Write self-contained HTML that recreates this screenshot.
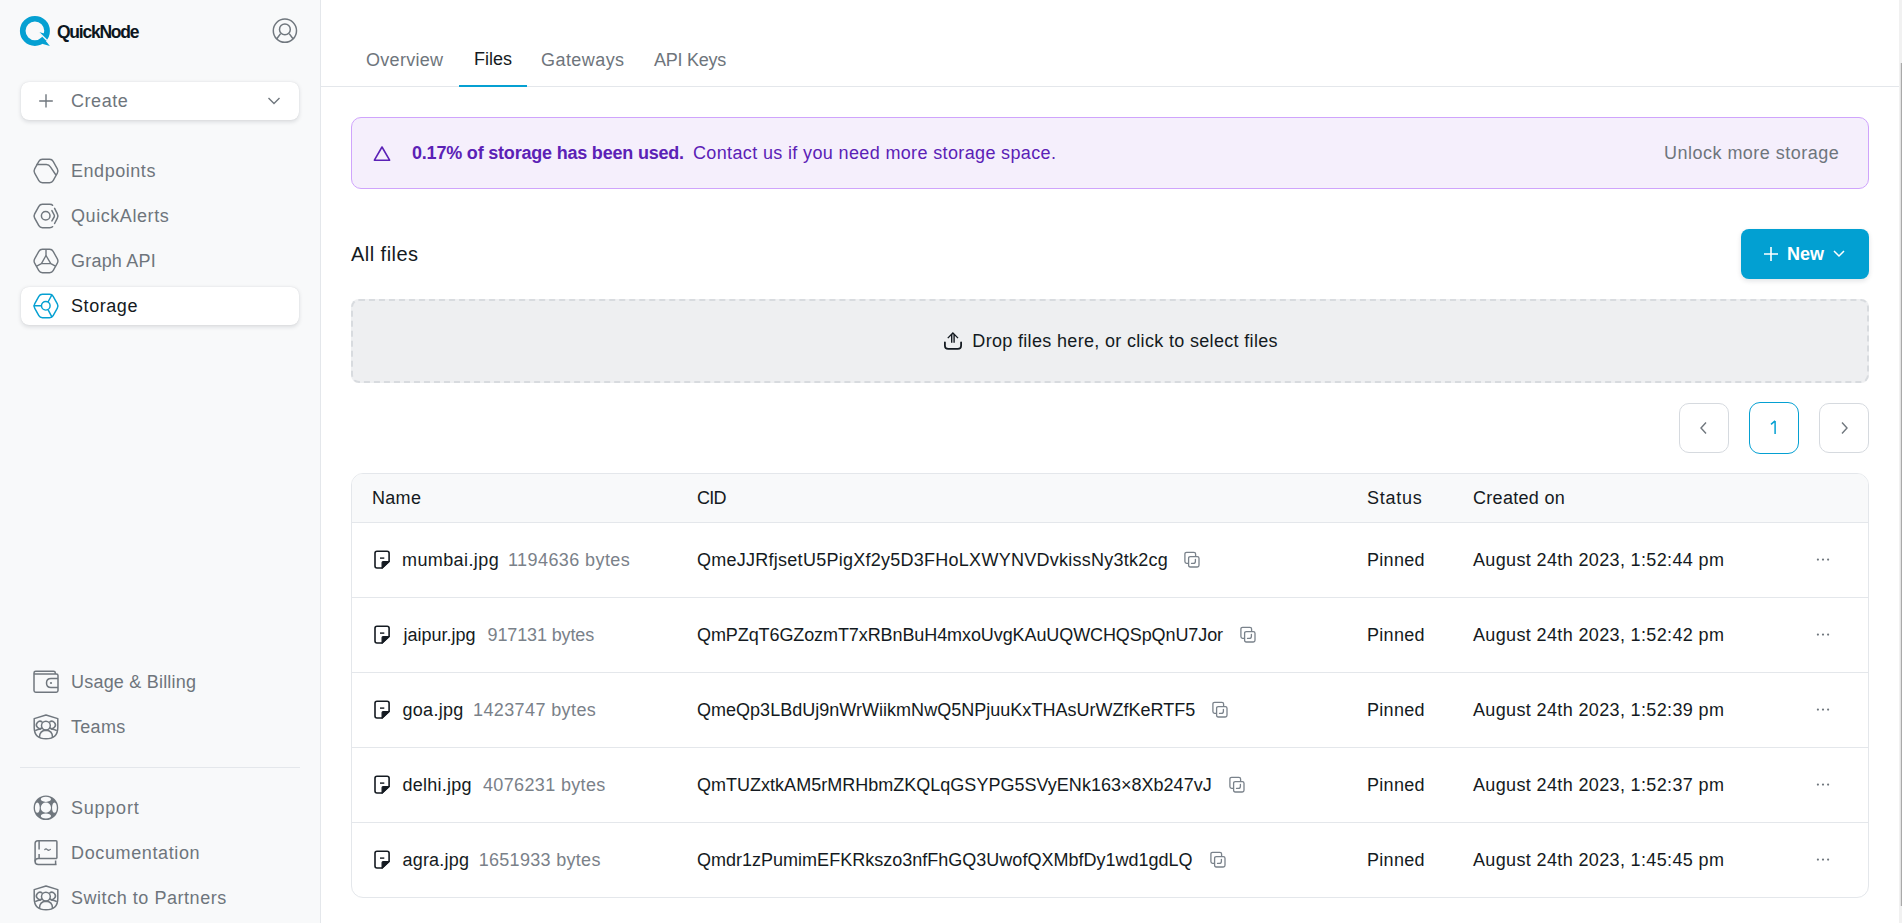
<!DOCTYPE html>
<html><head><meta charset="utf-8">
<style>
*{box-sizing:border-box;margin:0;padding:0}
html,body{width:1902px;height:923px;overflow:hidden;background:#fff;font-family:"Liberation Sans",sans-serif;}
.abs{position:absolute}
#side{position:absolute;left:0;top:0;width:321px;height:923px;background:#f8f9fa;border-right:1px solid #e4e7eb}
.t{position:absolute;white-space:nowrap;font-size:18px;line-height:20px;letter-spacing:0.3px}
.nav{color:#6e757c}
.dk{color:#141a21}
.ic{position:absolute;overflow:visible}
.ic *{vector-effect:non-scaling-stroke}
#scroll{position:absolute;left:1899px;top:0;width:3px;height:923px;background:#f1f1f1}
#thumb{position:absolute;left:1900px;top:63px;width:2px;height:843px;background:linear-gradient(to right,#e2e2e2 0,#e2e2e2 50%,#a9a9a9 50%)}
.row{position:absolute;left:352px;width:1516px;height:1px;background:#e4e7eb}
.gr{color:#7a8189}
</style></head>
<body>
<div id="side">
  <!-- logo -->
  <svg class="ic" style="left:14px;top:10px" width="42" height="42" viewBox="0 0 42 42">
    <path fill="#05a0d2" fill-rule="evenodd" d="M20.9 5.9a15 15 0 1 0 0 30a15 15 0 1 0 0-30zM20.9 11.5a9.35 9.35 0 1 1 0 18.7a9.35 9.35 0 1 1 0-18.7z"/>
    <path fill="#05a0d2" d="M24.6 22.1L30.4 23.6L29.6 27.4Z"/>
    <path fill="#05a0d2" d="M31 30L35.9 36L28.8 33.9L27 31Z"/>
    <path fill="none" stroke="#f8f9fa" stroke-width="1.4" d="M24.4 21.9L32.6 30.1"/>
  </svg>
  <div class="t" style="left:57px;top:22px;font-weight:bold;font-size:17.5px;color:#0c1620;letter-spacing:-1.25px">QuickNode</div>
  <!-- profile -->
  <svg class="ic" style="left:266px;top:13px" width="36" height="36" viewBox="0 0 36 36">
    <g fill="none" stroke="#70777e" stroke-width="1.5">
      <circle cx="18.9" cy="17.7" r="11.6"/>
      <circle cx="18.9" cy="16.4" r="5.4"/>
      <path d="M14.6 20.6L10.8 25.8M23.2 20.6L27 25.8"/>
    </g>
  </svg>
  <!-- create -->
  <div class="abs" style="left:21px;top:82px;width:278px;height:38px;background:#fff;border-radius:8px;box-shadow:0 1.5px 4px rgba(16,24,40,.13),0 0 1px rgba(16,24,40,.12)"></div>
  <svg class="ic" style="left:38px;top:93px" width="16" height="16" viewBox="0 0 16 16"><path d="M8 1.3V14.6M1.2 8H14.8" stroke="#70777e" stroke-width="1.4" fill="none"/></svg>
  <div class="t nav" style="left:71px;top:91px;letter-spacing:0.56px">Create</div>
  <svg class="ic" style="left:266px;top:95px" width="16" height="12" viewBox="0 0 16 12"><path d="M2.5 3L8 8.6L13.5 3" stroke="#70777e" stroke-width="1.4" fill="none"/></svg>

  <!-- nav icons -->
  <svg class="ic" style="left:28px;top:154px" width="36" height="36" viewBox="0 0 36 36">
    <g fill="none" stroke="#70777e" stroke-width="1.4" stroke-linejoin="round">
      <path d="M14.4 5.2H21.6Q24 5.2 25.16 7.3L29.34 14.9Q30.5 17 29.34 19.1L25.16 26.7Q24 28.8 21.6 28.8H14.4Q12 28.8 10.84 26.7L6.66 19.1Q5.5 17 6.66 14.9L10.84 7.3Q12 5.2 14.4 5.2Z"/>
      <path d="M8.4 10.5H18.3Q21 10.5 22.4 12.9L27.9 21"/>
    </g>
  </svg>
  <div class="t nav" style="left:71px;top:161px;letter-spacing:0.54px">Endpoints</div>
  <svg class="ic" style="left:28px;top:199px" width="36" height="36" viewBox="0 0 36 36">
    <g fill="none" stroke="#70777e" stroke-width="1.5" stroke-linecap="round" stroke-linejoin="round">
      <path d="M24.6 6.3Q24 5.2 21.6 5.2H14.4Q12 5.2 10.84 7.3L6.66 14.9Q5.5 17 6.66 19.1L10.84 26.7Q12 28.8 14.4 28.8H21.6Q24 28.8 24.6 27.7"/>
      <path d="M26.6 9.3L29.34 14.9Q30.5 17 29.34 19.1L26.6 24.5"/>
      <path d="M23.9 11.6L26.2 16Q26.7 17 26.2 18L23.9 21.9"/>
      <circle cx="17.7" cy="16.8" r="4.3"/>
    </g>
  </svg>
  <div class="t nav" style="left:71px;top:206px;letter-spacing:0.57px">QuickAlerts</div>
  <svg class="ic" style="left:28px;top:244px" width="36" height="36" viewBox="0 0 36 36">
    <g fill="none" stroke="#70777e" stroke-width="1.4" stroke-linejoin="round">
      <path d="M14.4 5.2H21.6Q24 5.2 25.16 7.3L29.34 14.9Q30.5 17 29.34 19.1L25.16 26.7Q24 28.8 21.6 28.8H14.4Q12 28.8 10.84 26.7L6.66 19.1Q5.5 17 6.66 14.9L10.84 7.3Q12 5.2 14.4 5.2Z"/>
      <path d="M18 5.2V11.5M18 11.5L13.4 19.6H22.8L18 11.5M13.4 19.6L8.2 22.4M22.8 19.6L28 22.4"/>
    </g>
  </svg>
  <div class="t nav" style="left:71px;top:251px;letter-spacing:0.21px">Graph API</div>
  <!-- storage active -->
  <div class="abs" style="left:21px;top:287px;width:278px;height:38px;background:#fff;border-radius:8px;box-shadow:0 1.5px 4px rgba(16,24,40,.13),0 0 1px rgba(16,24,40,.12)"></div>
  <svg class="ic" style="left:28px;top:289px" width="36" height="36" viewBox="0 0 36 36">
    <g fill="none" stroke="#05a0d2" stroke-width="1.45" stroke-linejoin="round">
      <path d="M14.4 5.2H21.6Q24 5.2 25.16 7.3L29.34 14.9Q30.5 17 29.34 19.1L25.16 26.7Q24 28.8 21.6 28.8H14.4Q12 28.8 10.84 26.7L6.66 19.1Q5.5 17 6.66 14.9L10.84 7.3Q12 5.2 14.4 5.2Z"/>
      <circle cx="17.8" cy="16.8" r="4.3"/>
      <path d="M5.6 16.8H13.5M20 13L24 5.6M20 20.6L24 28.2"/>
    </g>
  </svg>
  <div class="t dk" style="left:71px;top:296px;letter-spacing:0.57px">Storage</div>

  <!-- bottom nav -->
  <svg class="ic" style="left:28px;top:663px" width="36" height="36" viewBox="0 0 36 36">
    <g fill="none" stroke="#70777e" stroke-width="1.5" stroke-linejoin="round">
      <path d="M6 10.9V27.6Q6 29.3 7.7 29.3H28.3Q30 29.3 30 27.6V12.6Q30 10.9 28.3 10.9H6V9.9Q6 8.2 7.7 8.2H25.6Q27.3 8.2 27.3 9.9V10.9"/>
      <path d="M30 15.4H23Q18.5 15.4 18.5 19.9Q18.5 24.4 23 24.4H30"/>
    </g>
    <circle cx="23" cy="20" r="1.1" fill="#70777e"/>
  </svg>
  <div class="t nav" style="left:71px;top:672px;letter-spacing:0.21px">Usage &amp; Billing</div>
  <svg class="ic" style="left:28px;top:708px" width="36" height="36" viewBox="0 0 36 36">
    <g fill="none" stroke="#70777e" stroke-width="1.5" stroke-linejoin="round">
      <path d="M18 7L29.8 10.6V19.5Q29.8 30.8 18 30.8Q6.2 30.8 6.2 19.5V10.6Z"/>
      <circle cx="17.9" cy="17.6" r="4.4"/>
      <path d="M14.3 14.1A3.6 3.6 0 1 0 14.3 19.7"/>
      <path d="M21.5 14.1A3.6 3.6 0 1 1 21.5 19.7"/>
      <path d="M11.5 29.3Q11.5 22.5 18 22.3Q24.5 22.5 24.5 29.3"/>
      <path d="M7.2 22.6Q9.5 20.9 13.2 20.9M28.8 22.6Q26.5 20.9 22.8 20.9"/>
    </g>
  </svg>
  <div class="t nav" style="left:71px;top:717px;letter-spacing:0.3px">Teams</div>
  <div class="abs" style="left:20px;top:767px;width:280px;height:1px;background:#e4e7eb"></div>
  <svg class="ic" style="left:28px;top:789px" width="36" height="36" viewBox="0 0 36 36">
    <path fill="#70777e" fill-rule="evenodd" d="M17.9 6.4a12.3 12.3 0 1 0 0 24.6a12.3 12.3 0 1 0 0-24.6zM17.9 13.6a5.1 5.1 0 1 1 0 10.2a5.1 5.1 0 1 1 0-10.2z
      M17.9 7.8c3 0 5.1 1.1 5.1 2.55s-2.1 2.55-5.1 2.55s-5.1-1.1-5.1-2.55s2.1-2.55 5.1-2.55z
      M17.9 24.5c3 0 5.1 1.1 5.1 2.55s-2.1 2.55-5.1 2.55s-5.1-1.1-5.1-2.55s2.1-2.55 5.1-2.55z
      M9.35 13.5c1.4 0 2.4 2.3 2.4 5.15s-1 5.15-2.4 5.15s-2.4-2.3-2.4-5.15s1-5.15 2.4-5.15z
      M26.45 13.5c1.4 0 2.4 2.3 2.4 5.15s-1 5.15-2.4 5.15s-2.4-2.3-2.4-5.15s1-5.15 2.4-5.15z"/>
  </svg>
  <div class="t nav" style="left:71px;top:798px;letter-spacing:0.77px">Support</div>
  <svg class="ic" style="left:28px;top:834px" width="36" height="36" viewBox="0 0 36 36">
    <g fill="none" stroke="#70777e" stroke-width="1.5" stroke-linejoin="round">
      <path d="M28.9 24.6H10.2Q7.1 24.6 7.1 27.6Q7.1 30.6 10.2 30.6H28.5"/>
      <path d="M7.1 27.6V9.6Q7.1 6.8 9.9 6.8H28Q28.9 6.8 28.9 7.7V24.6"/>
      <path d="M11.1 7V15.5M11.1 20V24.6M27.6 26.6V30.6"/>
      <path d="M16.8 15.5Q18 14.2 19.3 15.6Q20.6 17 22.4 15.4" stroke-width="1.2" stroke-linecap="round"/>
    </g>
  </svg>
  <div class="t nav" style="left:71px;top:843px;letter-spacing:0.63px">Documentation</div>
  <svg class="ic" style="left:28px;top:879px" width="36" height="36" viewBox="0 0 36 36">
    <g fill="none" stroke="#70777e" stroke-width="1.5" stroke-linejoin="round">
      <path d="M18 7L29.8 10.6V19.5Q29.8 30.8 18 30.8Q6.2 30.8 6.2 19.5V10.6Z"/>
      <circle cx="17.9" cy="17.6" r="4.4"/>
      <path d="M14.3 14.1A3.6 3.6 0 1 0 14.3 19.7"/>
      <path d="M21.5 14.1A3.6 3.6 0 1 1 21.5 19.7"/>
      <path d="M11.5 29.3Q11.5 22.5 18 22.3Q24.5 22.5 24.5 29.3"/>
      <path d="M7.2 22.6Q9.5 20.9 13.2 20.9M28.8 22.6Q26.5 20.9 22.8 20.9"/>
    </g>
  </svg>
  <div class="t nav" style="left:71px;top:888px;letter-spacing:0.54px">Switch to Partners</div>
</div>

<!-- tabs -->
<div class="abs" style="left:321px;top:86px;width:1578px;height:1px;background:#e4e7eb"></div>
<div class="t nav" style="left:366px;top:50px">Overview</div>
<div class="t dk" style="left:474px;top:49px;letter-spacing:0">Files</div>
<div class="t nav" style="left:541px;top:50px;letter-spacing:0.44px">Gateways</div>
<div class="t nav" style="left:654px;top:50px;letter-spacing:-0.27px">API Keys</div>
<div class="abs" style="left:459px;top:85px;width:68px;height:2px;background:#05a0d2"></div>

<!-- alert -->
<div class="abs" style="left:351px;top:117px;width:1518px;height:72px;background:#f5effc;border:1px solid #cfa4fc;border-radius:10px"></div>
<svg class="ic" style="left:372px;top:144px" width="20" height="20" viewBox="0 0 20 20"><path d="M10 3L17.6 16.2H2.4Z" fill="none" stroke="#5b21b6" stroke-width="1.6" stroke-linejoin="round"/></svg>
<div class="t" style="left:412px;top:143px;color:#5b21b6;font-weight:bold;letter-spacing:-0.2px">0.17% of storage has been used.</div>
<div class="t" style="left:693px;top:143px;color:#5b21b6;letter-spacing:0.36px">Contact us if you need more storage space.</div>
<div class="t nav" style="left:1664px;top:143px;letter-spacing:0.48px">Unlock more storage</div>

<!-- all files -->
<div class="t dk" style="left:351px;top:243px;font-size:20px;line-height:22px;letter-spacing:0.46px">All files</div>
<div class="abs" style="left:1741px;top:229px;width:128px;height:50px;background:#02a0d2;border-radius:8px;box-shadow:0 2px 5px rgba(16,24,40,.12)"></div>
<svg class="ic" style="left:1762px;top:245px" width="18" height="18" viewBox="0 0 18 18"><path d="M9 2V16M2 9H16" stroke="#fff" stroke-width="1.6" fill="none"/></svg>
<div class="t" style="left:1787px;top:244px;color:#fff;font-weight:bold;letter-spacing:0">New</div>
<svg class="ic" style="left:1832px;top:248px" width="14" height="12" viewBox="0 0 14 12"><path d="M2 3L7 8L12 3" stroke="#fff" stroke-width="1.5" fill="none"/></svg>

<!-- dropzone -->
<div class="abs" style="left:351px;top:299px;width:1518px;height:84px;background:#eeeff1;border:2px dashed #d8dbdf;border-radius:8px"></div>
<svg class="ic" style="left:938px;top:324px" width="30" height="32" viewBox="0 0 30 32">
  <g fill="none" stroke="#141a21" stroke-width="1.8" stroke-linejoin="round" stroke-linecap="round">
    <path d="M14.9 8L9.3 13.7L10.3 14.4L13 11.8V18.8H16.8V11.8L19.5 14.4L20.5 13.7Z" fill="#141a21" stroke="none"/><path d="M14.9 10.8V18.6" stroke="#eeeff1" stroke-width="1"/>
    <path d="M6.9 18.3V21.5Q6.9 24.9 10.3 24.9H19.7Q23.1 24.9 23.1 21.5V18.3"/>
  </g>
</svg>
<div class="t dk" style="left:972.3px;top:331px;letter-spacing:0.33px">Drop files here, or click to select files</div>

<!-- pagination -->
<div class="abs" style="left:1679px;top:403px;width:50px;height:50px;border:1px solid #d6dadf;border-radius:10px"></div>
<svg class="ic" style="left:1696px;top:420px" width="16" height="16" viewBox="0 0 16 16"><path d="M10 2.6L5 8L10 13.4" stroke="#70777e" stroke-width="1.4" fill="none"/></svg>
<div class="abs" style="left:1749px;top:402px;width:50px;height:52px;border:1.5px solid #05a0d2;border-radius:11px"></div>
<svg class="ic" style="left:1766px;top:418px" width="16" height="18" viewBox="0 0 16 18"><path d="M9.1 2.9V16M9.1 2.9L5 6.4" stroke="#05a0d2" stroke-width="1.5" fill="none"/></svg>
<div class="abs" style="left:1819px;top:403px;width:50px;height:50px;border:1px solid #d6dadf;border-radius:10px"></div>
<svg class="ic" style="left:1836px;top:420px" width="16" height="16" viewBox="0 0 16 16"><path d="M6 2.6L11 8L6 13.4" stroke="#70777e" stroke-width="1.4" fill="none"/></svg>

<!-- table -->
<div class="abs" style="left:351px;top:473px;width:1518px;height:425px;border:1px solid #e4e7eb;border-radius:12px;overflow:hidden">
  <div class="abs" style="left:0;top:0;width:1516px;height:49px;background:#f8f9fa;border-bottom:1px solid #e4e7eb"></div>
</div>
<div class="t dk" style="left:372px;top:488px">Name</div>
<div class="t dk" style="left:697px;top:488px;letter-spacing:-0.8px">CID</div>
<div class="t dk" style="left:1367px;top:488px;letter-spacing:0.72px">Status</div>
<div class="t dk" style="left:1473px;top:488px">Created on</div>

<div id="rows">
<svg class="ic" style="left:370px;top:546px" width="24" height="28" viewBox="0 0 24 28"><path d="M12.1 22H7Q5 22 5 20V7.3Q5 5.3 7 5.3H17.1Q19.1 5.3 19.1 7.3V15.3Z" fill="none" stroke="#141a21" stroke-width="1.6" stroke-linejoin="round"/><path d="M12.1 22V16.6Q12.1 15.5 13.2 15.5H19.1Z" fill="#141a21" stroke="#141a21" stroke-width="1.2" stroke-linejoin="round"/><path d="M10 12.1H14.3" stroke="#141a21" stroke-width="1.4"/></svg>
<div class="t dk nm" style="left:402px;top:550px;letter-spacing:0.4px">mumbai.jpg</div>
<div class="t gr sz" style="left:508px;top:550px;letter-spacing:0.42px">1194636 bytes</div>
<div class="t dk cid" style="left:697px;top:550px;letter-spacing:0.26px">QmeJJRfjsetU5PigXf2y5D3FHoLXWYNVDvkissNy3tk2cg</div>
<svg class="ic" style="left:1180px;top:548px" width="24" height="24" viewBox="0 0 24 24"><g fill="none" stroke="#7a828b" stroke-width="1.3" stroke-linejoin="round"><path d="M8.6 15.3H6.6Q4.9 15.3 4.9 13.6V6.1Q4.9 4.4 6.6 4.4H13.9Q15.6 4.4 15.6 6.1V8.6"/><path d="M10.3 8.6H17.3Q19 8.6 19 10.3V17.3Q19 19 17.3 19H10.3Q8.6 19 8.6 17.3V10.3Q8.6 8.6 10.3 8.6Z"/><path d="M15.4 11.3V13.2Q15.4 15.4 13.2 15.4H11.5" stroke-linecap="round"/></g></svg>
<div class="t dk" style="left:1367px;top:550px">Pinned</div>
<div class="t dk dt" style="left:1473px;top:550px;letter-spacing:0.36px">August 24th 2023, 1:52:44 pm</div>
<svg class="ic" style="left:1814px;top:552px" width="18" height="16" viewBox="0 0 18 16"><g fill="#70777e"><circle cx="3.9" cy="7.6" r="1.1"/><circle cx="9" cy="7.6" r="1.1"/><circle cx="14.1" cy="7.6" r="1.1"/></g></svg>
<div class="row" style="top:597px"></div>
<svg class="ic" style="left:370px;top:621px" width="24" height="28" viewBox="0 0 24 28"><path d="M12.1 22H7Q5 22 5 20V7.3Q5 5.3 7 5.3H17.1Q19.1 5.3 19.1 7.3V15.3Z" fill="none" stroke="#141a21" stroke-width="1.6" stroke-linejoin="round"/><path d="M12.1 22V16.6Q12.1 15.5 13.2 15.5H19.1Z" fill="#141a21" stroke="#141a21" stroke-width="1.2" stroke-linejoin="round"/><path d="M10 12.1H14.3" stroke="#141a21" stroke-width="1.4"/></svg>
<div class="t dk nm" style="left:403.5px;top:625px;letter-spacing:0.0px">jaipur.jpg</div>
<div class="t gr sz" style="left:487.5px;top:625px;letter-spacing:-0.13px">917131 bytes</div>
<div class="t dk cid" style="left:697px;top:625px;letter-spacing:-0.09px">QmPZqT6GZozmT7xRBnBuH4mxoUvgKAuUQWCHQSpQnU7Jor</div>
<svg class="ic" style="left:1236px;top:623px" width="24" height="24" viewBox="0 0 24 24"><g fill="none" stroke="#7a828b" stroke-width="1.3" stroke-linejoin="round"><path d="M8.6 15.3H6.6Q4.9 15.3 4.9 13.6V6.1Q4.9 4.4 6.6 4.4H13.9Q15.6 4.4 15.6 6.1V8.6"/><path d="M10.3 8.6H17.3Q19 8.6 19 10.3V17.3Q19 19 17.3 19H10.3Q8.6 19 8.6 17.3V10.3Q8.6 8.6 10.3 8.6Z"/><path d="M15.4 11.3V13.2Q15.4 15.4 13.2 15.4H11.5" stroke-linecap="round"/></g></svg>
<div class="t dk" style="left:1367px;top:625px">Pinned</div>
<div class="t dk dt" style="left:1473px;top:625px;letter-spacing:0.36px">August 24th 2023, 1:52:42 pm</div>
<svg class="ic" style="left:1814px;top:627px" width="18" height="16" viewBox="0 0 18 16"><g fill="#70777e"><circle cx="3.9" cy="7.6" r="1.1"/><circle cx="9" cy="7.6" r="1.1"/><circle cx="14.1" cy="7.6" r="1.1"/></g></svg>
<div class="row" style="top:672px"></div>
<svg class="ic" style="left:370px;top:696px" width="24" height="28" viewBox="0 0 24 28"><path d="M12.1 22H7Q5 22 5 20V7.3Q5 5.3 7 5.3H17.1Q19.1 5.3 19.1 7.3V15.3Z" fill="none" stroke="#141a21" stroke-width="1.6" stroke-linejoin="round"/><path d="M12.1 22V16.6Q12.1 15.5 13.2 15.5H19.1Z" fill="#141a21" stroke="#141a21" stroke-width="1.2" stroke-linejoin="round"/><path d="M10 12.1H14.3" stroke="#141a21" stroke-width="1.4"/></svg>
<div class="t dk nm" style="left:402.5px;top:700px;letter-spacing:0.3px">goa.jpg</div>
<div class="t gr sz" style="left:473px;top:700px;letter-spacing:0.39px">1423747 bytes</div>
<div class="t dk cid" style="left:697px;top:700px;letter-spacing:0.02px">QmeQp3LBdUj9nWrWiikmNwQ5NPjuuKxTHAsUrWZfKeRTF5</div>
<svg class="ic" style="left:1208px;top:698px" width="24" height="24" viewBox="0 0 24 24"><g fill="none" stroke="#7a828b" stroke-width="1.3" stroke-linejoin="round"><path d="M8.6 15.3H6.6Q4.9 15.3 4.9 13.6V6.1Q4.9 4.4 6.6 4.4H13.9Q15.6 4.4 15.6 6.1V8.6"/><path d="M10.3 8.6H17.3Q19 8.6 19 10.3V17.3Q19 19 17.3 19H10.3Q8.6 19 8.6 17.3V10.3Q8.6 8.6 10.3 8.6Z"/><path d="M15.4 11.3V13.2Q15.4 15.4 13.2 15.4H11.5" stroke-linecap="round"/></g></svg>
<div class="t dk" style="left:1367px;top:700px">Pinned</div>
<div class="t dk dt" style="left:1473px;top:700px;letter-spacing:0.36px">August 24th 2023, 1:52:39 pm</div>
<svg class="ic" style="left:1814px;top:702px" width="18" height="16" viewBox="0 0 18 16"><g fill="#70777e"><circle cx="3.9" cy="7.6" r="1.1"/><circle cx="9" cy="7.6" r="1.1"/><circle cx="14.1" cy="7.6" r="1.1"/></g></svg>
<div class="row" style="top:747px"></div>
<svg class="ic" style="left:370px;top:771px" width="24" height="28" viewBox="0 0 24 28"><path d="M12.1 22H7Q5 22 5 20V7.3Q5 5.3 7 5.3H17.1Q19.1 5.3 19.1 7.3V15.3Z" fill="none" stroke="#141a21" stroke-width="1.6" stroke-linejoin="round"/><path d="M12.1 22V16.6Q12.1 15.5 13.2 15.5H19.1Z" fill="#141a21" stroke="#141a21" stroke-width="1.2" stroke-linejoin="round"/><path d="M10 12.1H14.3" stroke="#141a21" stroke-width="1.4"/></svg>
<div class="t dk nm" style="left:402.5px;top:775px;letter-spacing:0.26px">delhi.jpg</div>
<div class="t gr sz" style="left:483px;top:775px;letter-spacing:0.35px">4076231 bytes</div>
<div class="t dk cid" style="left:697px;top:775px;letter-spacing:0.015px">QmTUZxtkAM5rMRHbmZKQLqGSYPG5SVyENk163×8Xb247vJ</div>
<svg class="ic" style="left:1225px;top:773px" width="24" height="24" viewBox="0 0 24 24"><g fill="none" stroke="#7a828b" stroke-width="1.3" stroke-linejoin="round"><path d="M8.6 15.3H6.6Q4.9 15.3 4.9 13.6V6.1Q4.9 4.4 6.6 4.4H13.9Q15.6 4.4 15.6 6.1V8.6"/><path d="M10.3 8.6H17.3Q19 8.6 19 10.3V17.3Q19 19 17.3 19H10.3Q8.6 19 8.6 17.3V10.3Q8.6 8.6 10.3 8.6Z"/><path d="M15.4 11.3V13.2Q15.4 15.4 13.2 15.4H11.5" stroke-linecap="round"/></g></svg>
<div class="t dk" style="left:1367px;top:775px">Pinned</div>
<div class="t dk dt" style="left:1473px;top:775px;letter-spacing:0.36px">August 24th 2023, 1:52:37 pm</div>
<svg class="ic" style="left:1814px;top:777px" width="18" height="16" viewBox="0 0 18 16"><g fill="#70777e"><circle cx="3.9" cy="7.6" r="1.1"/><circle cx="9" cy="7.6" r="1.1"/><circle cx="14.1" cy="7.6" r="1.1"/></g></svg>
<div class="row" style="top:822px"></div>
<svg class="ic" style="left:370px;top:846px" width="24" height="28" viewBox="0 0 24 28"><path d="M12.1 22H7Q5 22 5 20V7.3Q5 5.3 7 5.3H17.1Q19.1 5.3 19.1 7.3V15.3Z" fill="none" stroke="#141a21" stroke-width="1.6" stroke-linejoin="round"/><path d="M12.1 22V16.6Q12.1 15.5 13.2 15.5H19.1Z" fill="#141a21" stroke="#141a21" stroke-width="1.2" stroke-linejoin="round"/><path d="M10 12.1H14.3" stroke="#141a21" stroke-width="1.4"/></svg>
<div class="t dk nm" style="left:402.5px;top:850px;letter-spacing:0.2px">agra.jpg</div>
<div class="t gr sz" style="left:478.7px;top:850px;letter-spacing:0.3px">1651933 bytes</div>
<div class="t dk cid" style="left:697px;top:850px;letter-spacing:0.01px">Qmdr1zPumimEFKRkszo3nfFhGQ3UwofQXMbfDy1wd1gdLQ</div>
<svg class="ic" style="left:1206px;top:848px" width="24" height="24" viewBox="0 0 24 24"><g fill="none" stroke="#7a828b" stroke-width="1.3" stroke-linejoin="round"><path d="M8.6 15.3H6.6Q4.9 15.3 4.9 13.6V6.1Q4.9 4.4 6.6 4.4H13.9Q15.6 4.4 15.6 6.1V8.6"/><path d="M10.3 8.6H17.3Q19 8.6 19 10.3V17.3Q19 19 17.3 19H10.3Q8.6 19 8.6 17.3V10.3Q8.6 8.6 10.3 8.6Z"/><path d="M15.4 11.3V13.2Q15.4 15.4 13.2 15.4H11.5" stroke-linecap="round"/></g></svg>
<div class="t dk" style="left:1367px;top:850px">Pinned</div>
<div class="t dk dt" style="left:1473px;top:850px;letter-spacing:0.36px">August 24th 2023, 1:45:45 pm</div>
<svg class="ic" style="left:1814px;top:852px" width="18" height="16" viewBox="0 0 18 16"><g fill="#70777e"><circle cx="3.9" cy="7.6" r="1.1"/><circle cx="9" cy="7.6" r="1.1"/><circle cx="14.1" cy="7.6" r="1.1"/></g></svg>
</div>
<div id="scroll"></div><div id="thumb"></div>
</body></html>
